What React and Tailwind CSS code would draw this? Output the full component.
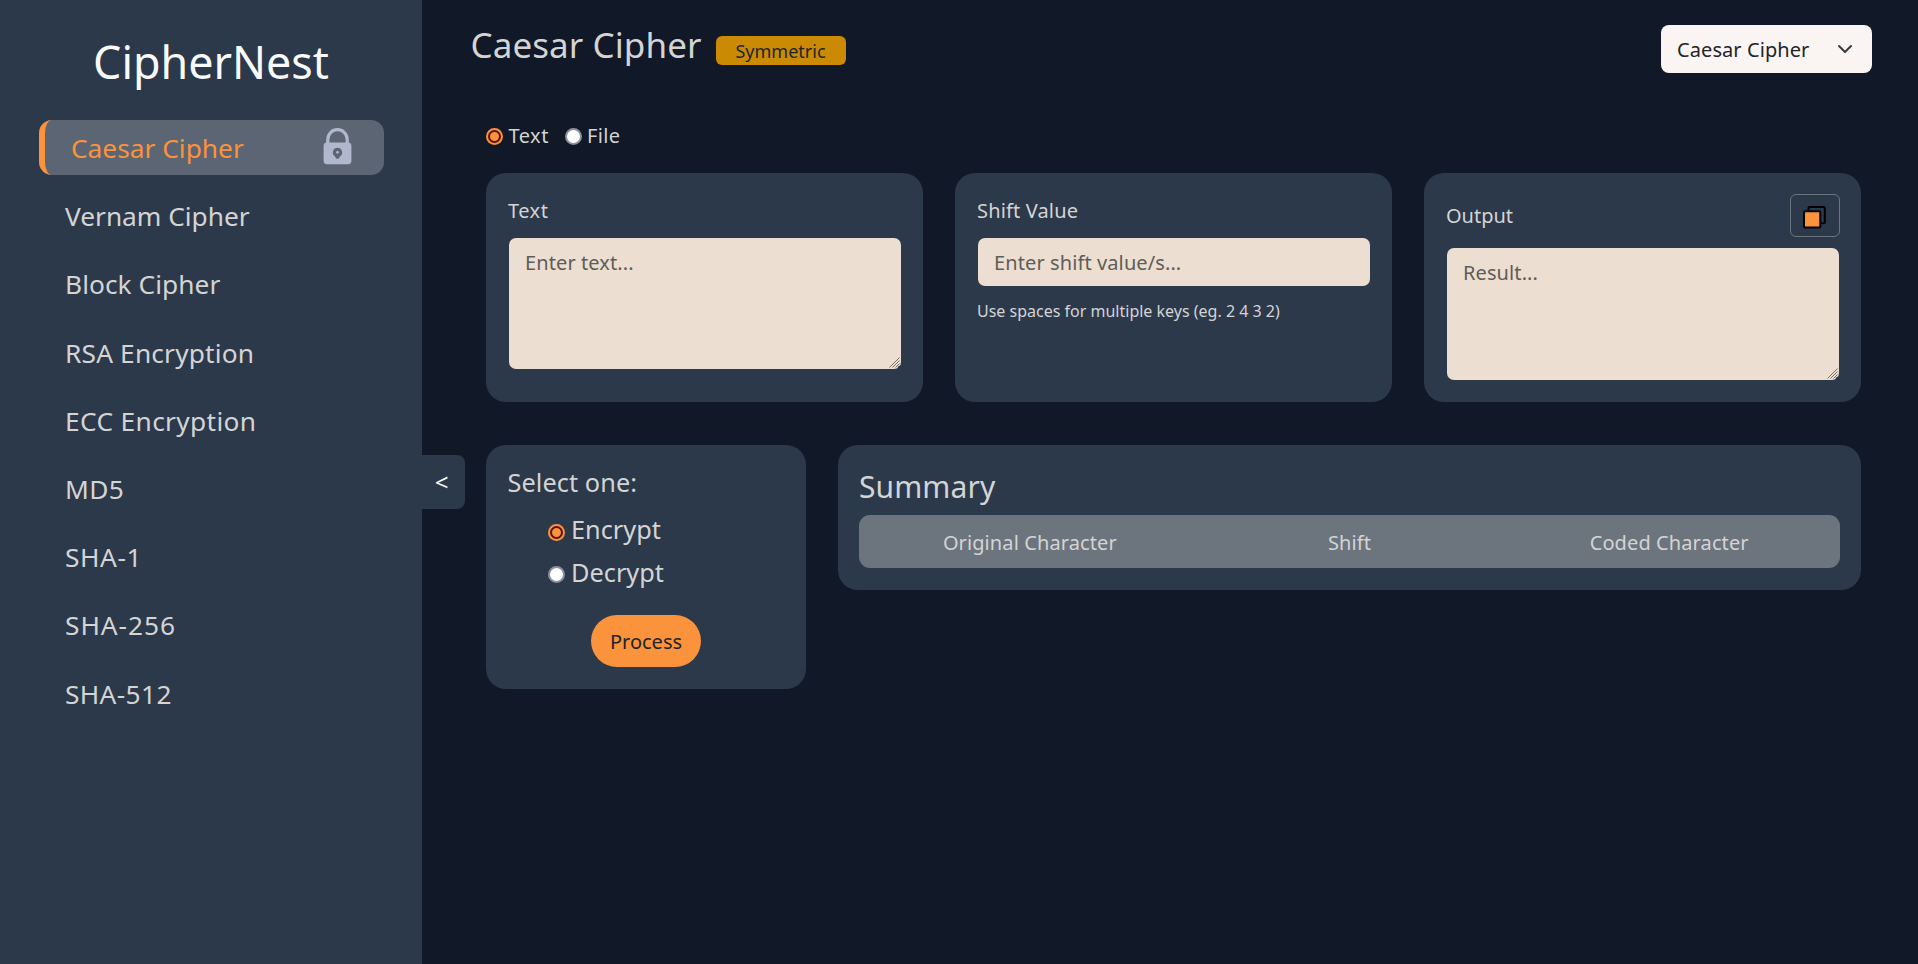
const NAV = [
  { name: "Vernam Cipher", spacing: "tracking-[-0.02px]" },
  { name: "Block Cipher", spacing: "tracking-[0.05px]" },
  { name: "RSA Encryption", spacing: "tracking-[0.17px]" },
  { name: "ECC Encryption", spacing: "tracking-[0.35px]" },
  { name: "MD5", spacing: "tracking-[0.4px]" },
  { name: "SHA-1", spacing: "tracking-[0.6px]" },
  { name: "SHA-256", spacing: "tracking-[0.95px]" },
  { name: "SHA-512", spacing: "tracking-[0.35px]" },
];

function LockIcon() {
  return (
    <svg className="relative -top-px h-[37px] w-[29px] shrink-0" viewBox="0 0 29 37" fill="none">
      <path d="M4.8 15V11.4a9.7 9.7 0 0 1 19.4 0V15" stroke="#b1b8ce" strokeWidth="3.2" />
      <path
        fillRule="evenodd"
        fill="#b1b8ce"
        d="M4 14.4h21a3.4 3.4 0 0 1 3.4 3.4v15a3.4 3.4 0 0 1-3.4 3.4H4a3.4 3.4 0 0 1-3.4-3.4v-15A3.4 3.4 0 0 1 4 14.4ZM14.5 19.7a4.7 4.7 0 0 0-2.7 8.5L13 30.3q1.5 1.1 3 0l1.2-2.1a4.7 4.7 0 0 0-2.7-8.5Z"
      />
      <circle cx="14.5" cy="24.3" r="1.4" fill="#b1b8ce" />
    </svg>
  );
}

function CopyIcon() {
  return (
    <svg className="size-[23px]" viewBox="0 0 23 23" fill="none" stroke="#000" strokeWidth="2">
      <rect x="5.5" y="1" width="16.3" height="16.3" rx="1" />
      <rect x="1" y="5.3" width="16.3" height="16.3" rx="1" fill="#fb923c" />
    </svg>
  );
}

function Radio({ checked }) {
  return checked ? (
    <span className="flex size-[17px] shrink-0 items-center justify-center rounded-full bg-[#fb923c]">
      <span className="size-[13px] rounded-full border-2 border-[#5e1200] bg-[#fb923c]" />
    </span>
  ) : (
    <span className="block size-[17px] shrink-0 rounded-full border-2 border-[#8f8f9d] bg-white" />
  );
}

const field =
  "block w-full rounded-lg border border-transparent bg-[#ecded0] bg-clip-padding px-4 text-xl leading-[30px] tracking-[0.1px] placeholder:text-[#5e5d58] outline-none";

function TextArea({ placeholder, size }) {
  return (
    <div className="relative -mr-px">
      <textarea placeholder={placeholder} className={field + " resize-none py-[10px] " + size} />
      <svg
        className="pointer-events-none absolute right-[2px] bottom-[2px] size-[11px]"
        viewBox="0 0 11 11"
        stroke="#77716b"
        strokeWidth="1"
      >
        <path d="M0.5 10.5 10.5 0.5M3.5 10.5 10.5 3.5M6.5 10.5 10.5 6.5" />
        <path d="M9 10.8 10.8 9" stroke="#2c394b" strokeWidth="1.5" />
      </svg>
    </div>
  );
}

export default function App() {
  return (
    <div className="flex h-[964px] w-full overflow-hidden bg-[#111827] font-['Noto_Sans',sans-serif] text-xl leading-[30px] text-[#d4d4d4]">
      <aside className="w-[422px] shrink-0 bg-[#2c394b] px-[38px] pt-[30px]">
        <h1 className="h-[90px] text-center text-[44.8px] leading-[63px] text-gray-50">CipherNest</h1>
        <nav className="flex flex-col gap-[13.2px] text-[26.3px] leading-[55px]">
          <div className="ml-px flex h-[55px] items-center justify-between rounded-[13px] border-l-[6px] border-[#fb923c] bg-[#5c6573] pr-[32px] pl-[26px] text-[#fb923c]">
            <span className="pt-[2px]">Caesar Cipher</span>
            <LockIcon />
          </div>
          {NAV.map(({ name, spacing }) => (
            <div key={name} className={"h-[55px] pt-px pl-[27px] " + spacing}>
              {name}
            </div>
          ))}
        </nav>
      </aside>

      <div className="-mr-[43px] flex w-[43px] shrink-0 items-center">
        <button className="h-[54px] w-[43px] rounded-r-lg bg-[#2c394b] pr-1 text-2xl leading-[30px] text-gray-50">
          &lt;
        </button>
      </div>

      <main className="flex flex-1 flex-col">
        <header className="flex h-[98px] items-start justify-between pt-[25px] pr-[46px] pl-[48.5px]">
          <div className="flex items-start gap-[14px]">
            <h2 className="-mt-[6px] text-[35px] leading-[52px] tracking-[0.08px]">Caesar Cipher</h2>
            <span className="mt-[11px] flex h-[29px] w-[130px] items-center justify-center rounded-md bg-[#ca8a04] text-[18px] text-[#212529]">
              Symmetric
            </span>
          </div>
          <div className="flex h-12 w-[211px] items-center justify-between rounded-lg bg-[#faf5f3] pr-[19px] pl-4 text-[#212529]">
            <span className="pt-[2px] tracking-[0.08px]">Caesar Cipher</span>
            <svg className="size-4" viewBox="0 0 16 16" fill="none" stroke="#343a40" strokeWidth="2" strokeLinecap="round" strokeLinejoin="round">
              <path d="m2 5 6 6 6-6" />
            </svg>
          </div>
        </header>

        <div className="flex flex-1 flex-col pr-[57px] pl-16">
          <div className="flex h-[75px] items-start gap-4 pt-[23px]">
            <label className="flex h-[31px] items-center gap-[5.5px]">
              <Radio checked />
              <span className="pb-[2px] tracking-[0.5px]">Text</span>
            </label>
            <label className="flex h-[31px] items-center gap-[5px]">
              <Radio />
              <span className="pb-[2px] tracking-[0.4px]">File</span>
            </label>
          </div>

          <section className="grid h-[229px] grid-cols-3 gap-8">
            <div className="rounded-[20px] bg-[#2c394b] px-[22px] pt-[23px]">
              <div className="h-[41px] tracking-[0.5px]">Text</div>
              <TextArea placeholder="Enter text..." size="h-[133px]" />
            </div>
            <div className="rounded-[20px] bg-[#2c394b] px-[22px] pt-[23px]">
              <div className="h-[41px] tracking-[0.15px]">Shift Value</div>
              <div className="-mr-px">
                <input placeholder="Enter shift value/s..." className={field + " h-[50px]"} />
              </div>
              <p className="mt-[11px] text-base leading-[26px]">Use spaces for multiple keys (eg. 2 4 3 2)</p>
            </div>
            <div className="rounded-[20px] bg-[#2c394b] px-[22px] pt-[21px]">
              <div className="flex h-[53px] items-start justify-between">
                <span className="pt-[7px]">Output</span>
                <button className="-mr-px flex h-[43px] w-[50px] items-center justify-center rounded-md border border-[#6c757d] pt-[3px] pr-px">
                  <CopyIcon />
                </button>
              </div>
              <TextArea placeholder="Result..." size="h-[134px]" />
            </div>
          </section>

          <section className="mt-[43px] flex items-start gap-8">
            <div className="h-[244px] w-[320px] rounded-[20px] bg-[#2c394b] px-[21.5px] pt-[19px] text-[25.3px] leading-[36px]">
              <div className="tracking-[0.08px]">Select one:</div>
              <div className="mt-[11px] flex flex-col gap-[7px] pl-[40.5px]">
                <label className="flex items-center gap-[6px]">
                  <span className="pt-[6px]"><Radio checked /></span>
                  <span>Encrypt</span>
                </label>
                <label className="flex items-center gap-[6px]">
                  <span className="pt-[5px]"><Radio /></span>
                  <span>Decrypt</span>
                </label>
              </div>
              <button className="mt-[25px] ml-[83.5px] flex h-[52px] w-[110px] items-center justify-center rounded-full bg-[#fb923c] pt-[2px] text-xl text-[#212529]">
                Process
              </button>
            </div>
            <div className="h-[145px] flex-1 rounded-[20px] bg-[#2c394b] pr-5 pl-[21px] pt-[19px]">
              <h3 className="h-[51px] text-[30px] leading-[45px] tracking-[0.1px]">Summary</h3>
              <div className="mr-px grid h-[53px] grid-cols-3 items-center rounded-[11px] bg-[#6c757d] px-[11px] pt-[2px] text-center tracking-[0.1px]">
                <span>Original Character</span>
                <span>Shift</span>
                <span>Coded Character</span>
              </div>
            </div>
          </section>
        </div>
      </main>
    </div>
  );
}
